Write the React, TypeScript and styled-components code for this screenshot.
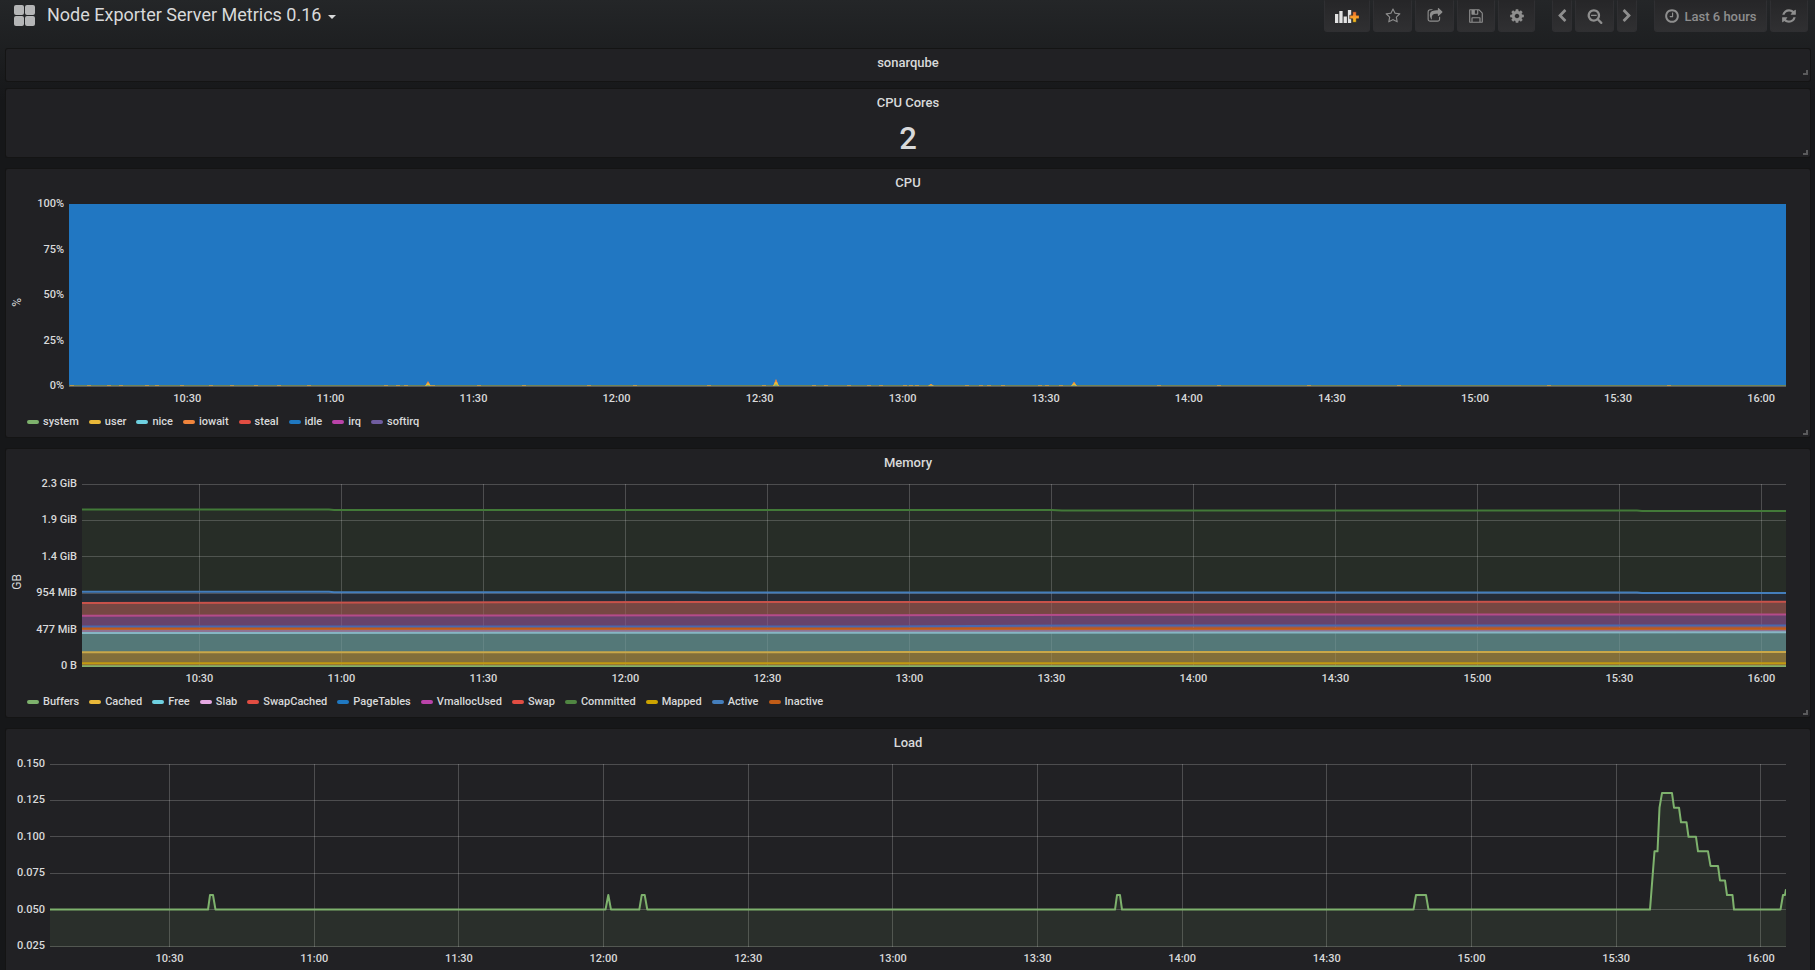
import React from 'react';
import styled, { createGlobalStyle, css } from 'styled-components';

const GlobalStyle = createGlobalStyle`
  *, *::before, *::after { box-sizing: border-box; }
  html, body, #root { height: 100%; }
  body {
    margin: 0;
    background: #161719;
    color: #d8d9da;
    font-family: Roboto, "Liberation Sans", sans-serif;
    font-size: 13px;
  }
  button { font: inherit; color: inherit; cursor: pointer; }
`;

const Page = styled.div`
  display: flex;
  flex-direction: column;
  height: 100%;
  overflow: hidden;
  background: linear-gradient(180deg, #242628 0, #161719 100px);
`;

const NavBar = styled.header`
  display: flex;
  align-items: flex-start;
  flex: none;
  height: 48px;
  padding: 0 7px 0 14px;
`;

const TitleButton = styled.button`
  display: flex;
  align-items: center;
  gap: 11px;
  height: 32px;
  padding: 0;
  border: 0;
  background: none;
  font-size: 18px;
  line-height: 30px;
  white-space: nowrap;
`;

const TitleText = styled.span`
  display: flex;
  align-items: center;
  gap: 7px;
  padding-bottom: 2px;
`;

const Caret = styled.span`
  margin-top: 4px;
  border: 4px solid transparent;
  border-top-color: #d8d9da;
  border-bottom: 0;
`;

const Toolbar = styled.div`
  display: flex;
  gap: 17px;
  margin-left: auto;
`;

const ButtonGroup = styled.div`
  display: flex;
  gap: 3px;
`;

const NavButton = styled.button<{ $width: number }>`
  display: flex;
  align-items: center;
  justify-content: center;
  gap: 4px;
  width: ${(p) => p.$width}px;
  height: 32px;
  padding: 0;
  border: 1px solid #2f2f32;
  border-top-color: #262628;
  border-radius: 0 0 3px 3px;
  background: linear-gradient(180deg, #262628, #303032);
  color: #8e8e8e;
  font-size: 13px;
  font-weight: 500;
  white-space: nowrap;
`;

const Dashboard = styled.main`
  flex: 1;
  min-height: 0;
  overflow-y: auto;
  scrollbar-width: none;
  padding: 1px 5px 12px 6px;
  display: flex;
  flex-direction: column;
  gap: 12px;
`;

const StatGroup = styled.div`
  display: flex;
  flex: none;
  flex-direction: column;
  gap: 8px;
`;

const PanelBox = styled.section`
  position: relative;
  flex: none;
  border-radius: 2px;
  background: #212124;
  box-shadow: 0 0 0 1px #141414;
`;

const PanelTitle = styled.h2`
  margin: 0;
  font-size: 13px;
  font-weight: 500;
  line-height: 27px;
  text-align: center;
`;

const ResizeHandle = styled.span<{ $bottom?: number }>`
  position: absolute;
  right: 2px;
  bottom: ${(p) => p.$bottom ?? 2}px;
  width: 5px;
  height: 5px;
  border: solid #5a5a5c;
  border-width: 0 2px 2px 0;
`;

const TitleOnly = styled.div`
  padding-bottom: 5px;
`;

const BigNumber = styled.div`
  height: 41px;
  font-size: 31px;
  font-weight: 500;
  line-height: 45px;
  text-align: center;
`;

const ChartRow = styled.div`
  display: flex;
  padding: 8px 24px 0 0;
`;

const AxisName = styled.div`
  display: flex;
  align-items: center;
  justify-content: center;
  flex: 0 0 22px;
  padding-bottom: 9px;
  font-size: 12px;
  line-height: 14px;

  span {
    writing-mode: vertical-rl;
    transform: rotate(180deg);
  }
`;

const axisText = css`
  font-size: 11px;
  line-height: 14px;
  font-weight: 500;
  white-space: nowrap;
`;

const YAxis = styled.div<{ $width: number }>`
  display: flex;
  flex-direction: column;
  justify-content: space-between;
  flex: 0 0 ${(p) => p.$width}px;
  height: 196px;
  margin-top: -7px;
  padding-right: 5px;
  text-align: right;
  ${axisText}
`;

const PlotColumn = styled.div`
  flex: 1;
  min-width: 0;
`;

const Plot = styled.svg`
  display: block;
  width: 100%;
  height: 183px;
`;

const XAxis = styled.div`
  display: flex;
  height: 22px;
  padding: 5px 0 3px;
  padding-left: calc(100% * 49 / 1800);
  ${axisText}

  span {
    flex: 0 0 auto;
    width: calc(100% * 1800 / 1751 / 12);
    text-align: center;
  }
`;

const LegendList = styled.ul`
  display: flex;
  flex-wrap: wrap;
  gap: 0 10px;
  margin: 0;
  padding: 5px 21px 7px;
  list-style: none;
`;

const LegendButton = styled.button`
  display: flex;
  align-items: center;
  gap: 4px;
  padding: 0;
  border: 0;
  background: none;
  font-size: 11px;
  font-weight: 500;
  line-height: 16px;
`;

const Swatch = styled.span<{ $color: string }>`
  width: 12px;
  height: 4px;
  border-radius: 2px;
  background: ${(p) => p.$color};
`;

/* ---------- icons ---------- */

const ICONS = {
  star: 'M1201 1004l306-297-422-62-189-382-189 382-422 62 306 297-73 421 378-199 377 199zm527-357q0 22-26 48l-363 354 86 500q1 7 1 20 0 50-41 50-19 0-40-12l-449-236-449 236q-22 12-40 12-21 0-31.5-14.5t-10.5-35.5q0-6 2-20l86-500-364-354q-25-27-25-48 0-37 56-46l502-73 225-455q19-41 49-41t49 41l225 455 502 73q56 9 56 46z',
  share: 'M1472 989v259q0 119-84.500 203.500t-203.500 84.500h-832q-119 0-203.500-84.500t-84.500-203.500v-832q0-119 84.500-203.500t203.500-84.500h255q13 0 22.500 9.500t9.500 22.500q0 27-26 32-77 26-133 60-10 4-16 4h-112q-66 0-113 47t-47 113v832q0 66 47 113t113 47h832q66 0 113-47t47-113v-214q0-19 18-29 28-13 54-37 16-16 35-8 21 9 21 29zm237-496l-384 384q-18 19-45 19-12 0-25-5-39-17-39-59v-192h-160q-323 0-438 131-119 137-74 473 3 23-20 34-8 2-12 2-16 0-26-13-10-14-21-31t-39.500-68.500-49.500-99.500-38.500-114-17.500-122q0-49 3.500-91t14-90 28-88 47-81.500 68.500-74 94.500-61.500 124.500-48.500 159.500-30.500 196.500-11h160v-192q0-42 39-59 13-5 25-5 26 0 45 19l384 384q19 19 19 45t-19 45z',
  save: 'M512 1536h768v-384h-768v384zm896 0h128v-896q0-14-10-38.500t-20-34.500l-281-281q-10-10-34-20t-39-10v416q0 40-28 68t-68 28h-576q-40 0-68-28t-28-68v-416h-128v1280h128v-416q0-40 28-68t68-28h832q40 0 68 28t28 68v416zm-384-928v-320q0-13-9.500-22.500t-22.500-9.500h-192q-13 0-22.500 9.500t-9.500 22.500v320q0 13 9.500 22.500t22.500 9.500h192q13 0 22.500-9.500t9.500-22.500zm640 32v928q0 40-28 68t-68 28h-1344q-40 0-68-28t-28-68v-1344q0-40 28-68t68-28h928q40 0 88 20t76 48l280 280q28 28 48 76t20 88z',
  cog: 'M1152 896q0-106-75-181t-181-75-181 75-75 181 75 181 181 75 181-75 75-181zm512-109v222q0 12-8 23t-20 13l-185 28q-19 54-39 91 35 50 107 138 10 12 10 25t-9 23q-27 37-99 108t-94 71q-12 0-26-9l-138-108q-44 23-91 38-16 136-29 186-7 28-36 28h-222q-14 0-24.500-8.500t-11.500-21.500l-28-184q-49-16-90-37l-141 107q-10 9-25 9-14 0-25-11-126-114-165-168-7-10-7-23 0-12 8-23 15-21 51-66.500t54-70.500q-27-50-41-99l-183-27q-13-2-21-12.500t-8-23.500v-222q0-12 8-23t19-13l186-28q14-46 39-92-40-57-107-138-10-12-10-24 0-10 9-23 26-36 98.500-107.500t94.500-71.500q13 0 26 10l138 107q44-23 91-38 16-136 29-186 7-28 36-28h222q14 0 24.500 8.500t11.500 21.500l28 184q49 16 90 37l142-107q9-9 24-9 13 0 25 10 129 119 165 170 7 8 7 22 0 12-8 23-15 21-51 66.500t-54 70.500q26 50 41 98l183 28q13 2 21 12.500t8 23.500z',
  left: 'M1427 301l-531 531 531 531q19 19 19 45t-19 45l-166 166q-19 19-45 19t-45-19l-742-742q-19-19-19-45t19-45l742-742q19-19 45-19t45 19l166 166q19 19 19 45t-19 45z',
  right: 'M1363 877l-742 742q-19 19-45 19t-45-19l-166-166q-19-19-19-45t19-45l531-531-531-531q-19-19-19-45t19-45l166-166q19-19 45-19t45 19l742 742q19 19 19 45t-19 45z',
  zoomOut: 'M1088 800v64q0 13-9.500 22.500t-22.500 9.500h-576q-13 0-22.500-9.500t-9.500-22.500v-64q0-13 9.500-22.500t22.500-9.500h576q13 0 22.500 9.500t9.500 22.500zm128 32q0-185-131.500-316.500t-316.500-131.500-316.500 131.500-131.500 316.500 131.500 316.500 316.500 131.500 316.500-131.500 131.500-316.500zm512 832q0 53-37.500 90.500t-90.500 37.500q-54 0-90-38l-343-342q-179 124-399 124-143 0-273.500-55.500t-225-150-150-225-55.500-273.500 55.500-273.500 150-225 225-150 273.500-55.500 273.500 55.500 225 150 150 225 55.500 273.500q0 220-124 399l343 343q37 37 37 90z',
  clock: 'M1024 544v448q0 14-9 23t-23 9h-320q-14 0-23-9t-9-23v-64q0-14 9-23t23-9h224v-352q0-14 9-23t23-9h64q14 0 23 9t9 23zm416 352q0-148-73-273t-198-198-273-73-273 73-198 198-73 273 73 273 198 198 273 73 273-73 198-198 73-273zm224 0q0 209-103 385.500t-279.500 279.500-385.500 103-385.500-103-279.500-279.500-103-385.500 103-385.500 279.500-279.500 385.500-103 385.500 103 279.500 279.500 103 385.500z',
  refresh: 'M1639 1056q0 5-1 7-64 268-268 434.500t-478 166.500q-146 0-282.500-55t-243.500-157l-129 129q-19 19-45 19t-45-19-19-45v-448q0-26 19-45t45-19h448q26 0 45 19t19 45-19 45l-137 137q71 66 161 102t187 36q134 0 250-65t186-179q11-17 53-117 8-23 30-23h192q13 0 22.500 9.500t9.500 22.500zm25-800v448q0 26-19 45t-45 19h-448q-26 0-45-19t-19-45 19-45l138-138q-148-137-349-137-134 0-250 65t-186 179q-11 17-53 117-8 23-30 23h-199q-13 0-22.500-9.500t-9.500-22.500v-7q65-268 270-434.500t480-166.500q146 0 284 55.500t245 156.500l130-129q19-19 45-19t45 19 19 45z',
};

const Icon = ({ name, size = 16 }: { name: keyof typeof ICONS; size?: number }) => (
  <svg width={size} height={size} viewBox="0 0 1792 1792" fill="currentColor" aria-hidden="true">
    <path d={ICONS[name]} />
  </svg>
);

const GridLogo = () => (
  <svg width="22" height="22" viewBox="0 0 22 22" fill="#b4b5b6" aria-hidden="true">
    <rect x="0" y="0" width="10" height="10" rx="2" />
    <rect x="11" y="0" width="10" height="10" rx="2" />
    <rect x="0" y="11" width="10" height="10" rx="2" />
    <rect x="11" y="11" width="10" height="10" rx="2" />
  </svg>
);

const AddPanelIcon = () => (
  <svg width="24" height="15" viewBox="0 0 24 15" aria-hidden="true">
    <defs>
      <linearGradient id="plus" x1="0" y1="0" x2="0" y2="1">
        <stop offset="0" stopColor="#f0662b" />
        <stop offset="0.5" stopColor="#fa9a2c" />
        <stop offset="1" stopColor="#f5c518" />
      </linearGradient>
    </defs>
    <g fill="#e3e3e3">
      <rect x="0" y="5" width="3.3" height="9" />
      <rect x="4.3" y="2" width="3.3" height="12" />
      <rect x="8.6" y="7.5" width="3.3" height="6.5" />
      <rect x="12.9" y="1" width="3.3" height="13" />
    </g>
    <path
      d="M17.700 2.700h3.600v3.500h3v3.600h-3v3.500h-3.600v-3.500h-3V6.200h3z"
      fill="url(#plus)"
      stroke="#29292b"
      strokeWidth="0.6"
    />
  </svg>
);

/* ---------- chart parts ---------- */

const PLOT_HEIGHT = 183;
const SPAN = 360;
const FIRST_TICK = 24.8;
const TICKS = ['10:30', '11:00', '11:30', '12:00', '12:30', '13:00', '13:30', '14:00', '14:30', '15:00', '15:30', '16:00'];

type Point = [number, number];

const toPath = (points: Point[]) => points.map(([x, y]) => `${x},${y}`).join(' L');

const GridLines = ({ steps, alpha }: { steps: number; alpha: number }) => (
  <g stroke={`rgba(255,255,255,${alpha})`} shapeRendering="crispEdges">
    {Array.from({ length: steps + 1 }, (_, i) => Math.floor((i * 182) / steps) + 0.5).map((y) => (
      <line key={y} x1="0" x2="100%" y1={y} y2={y} />
    ))}
    {TICKS.map((t, i) => {
      const x = `${((FIRST_TICK + i * 30) / SPAN) * 100}%`;
      return <line key={t} x1={x} x2={x} y1={0} y2={PLOT_HEIGHT} />;
    })}
  </g>
);

interface ChartProps {
  title: string;
  axisName?: string;
  axisWidth: number;
  yTicks: string[];
  legend?: [string, string][];
  children: React.ReactNode;
}

const Legend = ({ items }: { items: [string, string][] }) => (
  <LegendList>
    {items.map(([label, color]) => (
      <li key={label}>
        <LegendButton type="button">
          <Swatch $color={color} />
          {label}
        </LegendButton>
      </li>
    ))}
  </LegendList>
);

const ChartPanel = ({ title, axisName, axisWidth, yTicks, legend, children }: ChartProps) => (
  <PanelBox>
    <PanelTitle>{title}</PanelTitle>
    <ChartRow>
      {axisName && (
        <AxisName>
          <span>{axisName}</span>
        </AxisName>
      )}
      <YAxis $width={axisWidth}>
        {yTicks.map((t) => (
          <span key={t}>{t}</span>
        ))}
      </YAxis>
      <PlotColumn>
        <Plot role="img" aria-label={`${title} chart`}>
          {children}
        </Plot>
        <XAxis>
          {TICKS.map((t) => (
            <span key={t}>{t}</span>
          ))}
        </XAxis>
      </PlotColumn>
    </ChartRow>
    {legend && <Legend items={legend} />}
    <ResizeHandle />
  </PanelBox>
);

/* ---------- CPU ---------- */

const CPU_LEGEND: [string, string][] = [
  ['system', '#7EB26D'],
  ['user', '#EAB839'],
  ['nice', '#6ED0E0'],
  ['iowait', '#EF843C'],
  ['steal', '#E24D42'],
  ['idle', '#1F78C1'],
  ['irq', '#BA43A9'],
  ['softirq', '#705DA0'],
];

const CPU_SPIKES: Point[] = [
  [359, 4.5],
  [707, 6.5],
  [862, 2],
  [1005, 4],
];
const CPU_RIPPLES = [3, 20, 40, 52, 78, 88, 113, 142, 163, 187, 210, 240, 317, 329, 337, 364, 410, 455, 520, 566, 640, 695, 745, 757, 780, 800, 812, 836, 842, 848, 898, 912, 920, 934, 971, 978, 992, 1090, 1150, 1240, 1330, 1480, 1600];

const CpuPlot = () => (
  <>
    <rect width="100%" height="182" fill="#2177c2" />
    <svg width="100%" height={PLOT_HEIGHT} viewBox="0 0 1717 183" preserveAspectRatio="none">
      <rect y="181" width="1717" height="1" fill="#6f8558" />
      {CPU_RIPPLES.map((x) => (
        <rect key={x} x={x - 2} y="181" width="4" height="1" fill="#b89a48" />
      ))}
      {CPU_SPIKES.map(([x, h]) => (
        <g key={x}>
          <path d={`M${x - 2.5} 182l2-${h}h1l2 ${h}z`} fill="#EF843C" />
          <path d={`M${x - 3} 182l2-${h * 0.6}h2l2 ${h * 0.6}z`} fill="#EAB839" />
          <path d={`M${x - 2} 182l1-${h * 0.25}h2l1 ${h * 0.25}z`} fill="#7EB26D" />
        </g>
      ))}
    </svg>
    <rect y="182" width="100%" height="1" fill="#5b5b5b" />
  </>
);

/* ---------- Memory ---------- */

const MEMORY_LEGEND: [string, string][] = [
  ['Buffers', '#7EB26D'],
  ['Cached', '#EAB839'],
  ['Free', '#6ED0E0'],
  ['Slab', '#E5A8E2'],
  ['SwapCached', '#E24D42'],
  ['PageTables', '#1F78C1'],
  ['VmallocUsed', '#BA43A9'],
  ['Swap', '#E24D42'],
  ['Committed', '#508642'],
  ['Mapped', '#CCA300'],
  ['Active', '#447EBC'],
  ['Inactive', '#C15C17'],
];

interface Series {
  name: string;
  line: string;
  fill: string;
  points: Point[];
}

const MEMORY_SERIES: Series[] = [
  { name: 'committed', line: '#427a38', fill: 'rgba(80,134,66,0.12)', points: [[0, 25.5], [247, 25.5], [252, 26], [970, 26], [980, 26.5], [1555, 26.5], [1560, 27], [1704, 27]] },
  { name: 'active', line: '#447EBC', fill: 'rgba(68,126,188,0.12)', points: [[0, 107.7], [247, 107.7], [252, 108.2], [615, 108.2], [620, 108.6], [1555, 108.6], [1560, 109], [1704, 109]] },
  { name: 'swap', line: '#c8524a', fill: '#764743', points: [[0, 119], [300, 118.5], [620, 118], [1000, 118], [1700, 117.8], [1704, 117.8]] },
  { name: 'vmalloc', line: '#b54b8a', fill: '#67436c', points: [[0, 131.7], [250, 131.5], [800, 131.3], [1200, 130.5], [1704, 130.5]] },
  { name: 'pagetables', line: '#4a68ae', fill: '#a05a50', points: [[0, 142.5], [800, 142.5], [1000, 141.5], [1704, 141.5]] },
  { name: 'inactive', line: '#c15c17', fill: '#a07078', points: [[0, 144.7], [1704, 144.7]] },
  { name: 'slab', line: '#8f7392', fill: '#8a7790', points: [[0, 147], [1704, 147]] },
  { name: 'free', line: '#86b6c4', fill: '#547878', points: [[0, 149], [800, 148.7], [1704, 148.3]] },
  { name: 'cached', line: '#c9a748', fill: '#826e3a', points: [[0, 168.3], [700, 168.3], [800, 168], [1704, 168]] },
  { name: 'mapped', line: '#c29a10', fill: '#8c6d3a', points: [[0, 179.2], [1704, 179.2]] },
  { name: 'buffers', line: '#84b069', fill: '#84b069', points: [[0, 182.3], [1704, 182.3]] },
];

const MemoryPlot = () => (
  <>
    <GridLines steps={5} alpha={0.12} />
    <svg width="100%" height={PLOT_HEIGHT} viewBox="0 0 1704 183" preserveAspectRatio="none">
      {MEMORY_SERIES.map((s, i) => {
        const below = MEMORY_SERIES[i + 1]?.points ?? ([[0, 183], [1704, 183]] as Point[]);
        return (
          <path key={s.name} d={`M${toPath(s.points)} L${toPath([...below].reverse())}Z`} fill={s.fill} />
        );
      })}
    </svg>
    <GridLines steps={5} alpha={0.09} />
    <svg width="100%" height={PLOT_HEIGHT} viewBox="0 0 1704 183" preserveAspectRatio="none">
      {MEMORY_SERIES.map((s) => (
        <path
          key={s.name}
          d={`M${toPath(s.points)}`}
          fill="none"
          stroke={s.line}
          strokeWidth="2"
          vectorEffect="non-scaling-stroke"
        />
      ))}
    </svg>
  </>
);

/* ---------- Load ---------- */

const LOAD: Point[] = [
  [0, 0.05], [158, 0.05], [160, 0.06], [163, 0.06], [165.5, 0.05],
  [555.5, 0.05], [558.3, 0.06], [561, 0.05],
  [589.3, 0.05], [591.7, 0.06], [594.7, 0.06], [597.3, 0.05],
  [1065, 0.05], [1067, 0.06], [1070, 0.06], [1072, 0.05],
  [1363.5, 0.05], [1366, 0.06], [1376, 0.06], [1378.5, 0.05],
  [1600, 0.05], [1604.5, 0.09], [1607.5, 0.09], [1609.5, 0.12], [1612, 0.13],
  [1622, 0.13], [1624, 0.12], [1629, 0.12], [1631, 0.11], [1636.5, 0.11],
  [1638.5, 0.1], [1646, 0.1], [1648, 0.09], [1658, 0.09], [1660.5, 0.08],
  [1668, 0.08], [1670, 0.07], [1675, 0.07], [1677, 0.06], [1682.5, 0.06],
  [1684, 0.05], [1730.5, 0.05], [1733, 0.06], [1735, 0.06], [1736, 0.064],
];

const LoadPlot = () => {
  const line = toPath(LOAD.map(([x, v]): Point => [x, ((0.15 - v) / 0.125) * 182]));
  return (
    <>
      <GridLines steps={5} alpha={0.2} />
      <svg width="100%" height={PLOT_HEIGHT} viewBox="0 0 1736 183" preserveAspectRatio="none">
        <path d={`M${line} L1736,183 L0,183Z`} fill="rgba(126,178,109,0.1)" />
        <path
          d={`M${line}`}
          fill="none"
          stroke="#7EB26D"
          strokeWidth="2"
          strokeLinejoin="round"
          vectorEffect="non-scaling-stroke"
        />
      </svg>
    </>
  );
};

/* ---------- page ---------- */

export default function App() {
  return (
    <Page>
      <GlobalStyle />
      <NavBar>
        <TitleButton type="button">
          <GridLogo />
          <TitleText>
            Node Exporter Server Metrics 0.16
            <Caret />
          </TitleText>
        </TitleButton>
        <Toolbar>
          <ButtonGroup>
            <NavButton $width={46} type="button" aria-label="Add panel"><AddPanelIcon /></NavButton>
            <NavButton $width={39} type="button" aria-label="Mark as favorite"><Icon name="star" /></NavButton>
            <NavButton $width={39} type="button" aria-label="Share dashboard"><Icon name="share" /></NavButton>
            <NavButton $width={38} type="button" aria-label="Save dashboard"><Icon name="save" /></NavButton>
            <NavButton $width={37} type="button" aria-label="Settings"><Icon name="cog" /></NavButton>
          </ButtonGroup>
          <ButtonGroup>
            <NavButton $width={20} type="button" aria-label="Back in time"><Icon name="left" size={14} /></NavButton>
            <NavButton $width={39} type="button" aria-label="Zoom out"><Icon name="zoomOut" /></NavButton>
            <NavButton $width={20} type="button" aria-label="Forward in time"><Icon name="right" size={14} /></NavButton>
          </ButtonGroup>
          <ButtonGroup>
            <NavButton $width={113} type="button"><Icon name="clock" />Last 6 hours</NavButton>
            <NavButton $width={38} type="button" aria-label="Refresh"><Icon name="refresh" /></NavButton>
          </ButtonGroup>
        </Toolbar>
      </NavBar>
      <Dashboard>
        <StatGroup>
          <PanelBox>
            <TitleOnly>
              <PanelTitle>sonarqube</PanelTitle>
            </TitleOnly>
            <ResizeHandle $bottom={6} />
          </PanelBox>
          <PanelBox>
            <PanelTitle>CPU Cores</PanelTitle>
            <BigNumber>2</BigNumber>
            <ResizeHandle />
          </PanelBox>
        </StatGroup>
        <ChartPanel
          title="CPU"
          axisName="%"
          axisWidth={41}
          yTicks={['100%', '75%', '50%', '25%', '0%']}
          legend={CPU_LEGEND}
        >
          <CpuPlot />
        </ChartPanel>
        <ChartPanel
          title="Memory"
          axisName="GB"
          axisWidth={54}
          yTicks={['2.3 GiB', '1.9 GiB', '1.4 GiB', '954 MiB', '477 MiB', '0 B']}
          legend={MEMORY_LEGEND}
        >
          <MemoryPlot />
        </ChartPanel>
        <ChartPanel
          title="Load"
          axisWidth={44}
          yTicks={['0.150', '0.125', '0.100', '0.075', '0.050', '0.025']}
          legend={[]}
        >
          <LoadPlot />
        </ChartPanel>
      </Dashboard>
    </Page>
  );
}
